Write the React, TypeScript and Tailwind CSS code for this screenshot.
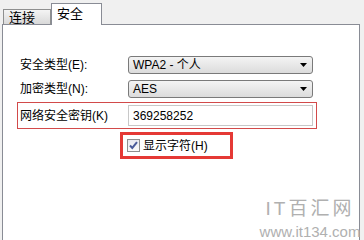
import React from "react";

const font = { fontFamily: '"Liberation Sans", "Noto Sans CJK SC", sans-serif' };

function Select({ value }: { value: string }) {
  return (
    <div className="flex h-[18px] w-[185px] items-center justify-between rounded-[3px] border border-[#7a7a7a] bg-gradient-to-b from-[#f4f4f4] to-[#dcdcdc] pl-[4px] pr-[5px]">
      <span className="text-[12px] leading-none text-black">{value}</span>
      <svg width="7" height="4" viewBox="0 0 7 4">
        <path d="M0 0h7L3.5 4z" fill="#000" />
      </svg>
    </div>
  );
}

export default function App() {
  return (
    <div
      className="relative h-[240px] w-[364px] overflow-hidden bg-[#f0f0f0] pl-[2px] pt-[3px] text-[12px] text-black"
      style={font}
    >
      {/* Tabs */}
      <div className="flex h-[21px] items-end">
        <div className="ml-[1px] flex h-[15px] w-[48px] items-center border border-b-0 border-[#8e8f8f] bg-gradient-to-b from-[#f4f4f4] to-[#d9d9d9] pl-[5px] text-[13px] leading-none">
          连接
        </div>
        <div className="relative z-10 -mb-px flex h-[22px] w-[51px] items-start border border-b-0 border-[#898c95] bg-white pl-[5px] pt-[3px] text-[13px] leading-none">
          安全
        </div>
      </div>

      {/* Panel */}
      <div className="h-[230px] w-[358px] border border-b-0 border-[#898c95] bg-white pl-[14px] pt-[31px]">
        <div className="flex items-center">
          <span className="w-[111px] pl-[3px] leading-none">安全类型(E):</span>
          <Select value="WPA2 - 个人" />
        </div>
        <div className="mt-[6px] flex items-center">
          <span className="w-[111px] pl-[3px] leading-none">加密类型(N):</span>
          <Select value="AES" />
        </div>

        <div className="mt-[4px] flex h-[27px] w-[300px] items-center border border-[#d24a4a] pl-[2px]">
          <span className="w-[108px] leading-none">网络安全密钥(K)</span>
          <div className="flex h-[21px] w-[185px] items-center border border-[#c8c8c8] pl-[4px] leading-none">
            369258252
          </div>
        </div>

        <div className="ml-[103px] mt-[3px] flex h-[27px] w-[113px] items-center border-[3px] border-[#e53935] pl-[4px]">
          <div className="flex h-[13px] w-[13px] items-center justify-center border border-[#8f8f8f] bg-gradient-to-b from-[#e8e8f0] to-[#fafafa]">
            <svg width="9" height="9" viewBox="0 0 9 9">
              <path d="M1 4.5l2.3 2.5L8 1.2" fill="none" stroke="#4a5a9a" strokeWidth="2" />
            </svg>
          </div>
          <span className="ml-[3px] leading-none">显示字符(H)</span>
        </div>
      </div>

      {/* Watermark */}
      <div className="absolute left-[260px] top-[199px] flex w-[100px] flex-col items-center text-[#b0b0b0]">
        <span className="text-[19px] leading-none tracking-[3px]">IT百汇网</span>
        <span className="mt-[6px] text-[15px] leading-none">www.it134.com</span>
      </div>
    </div>
  );
}
